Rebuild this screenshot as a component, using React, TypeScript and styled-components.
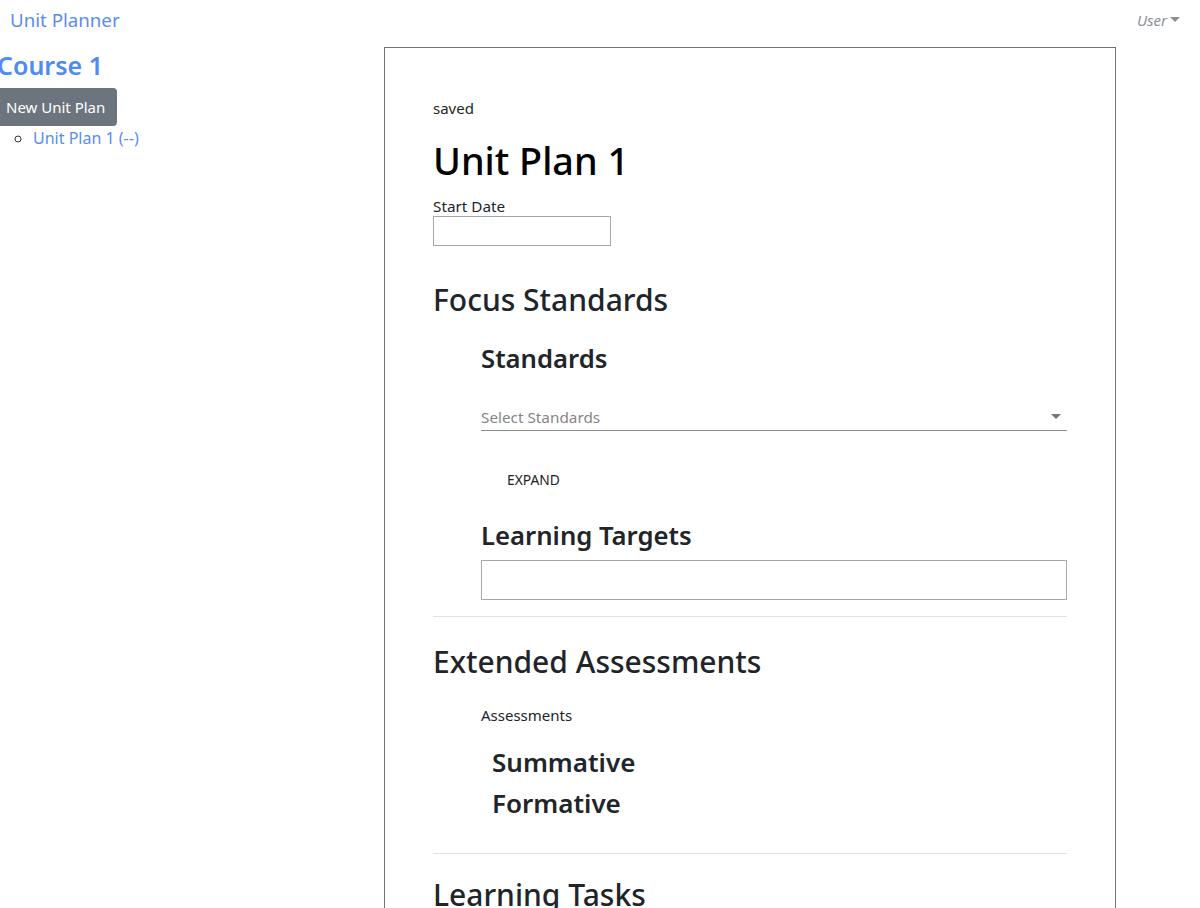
import React from "react";
import styled, { createGlobalStyle } from "styled-components";

const GlobalStyle = createGlobalStyle`
  html, body { margin: 0; padding: 0; background: #fff; }
  body {
    font-family: "Noto Sans", "Open Sans", sans-serif;
    color: #212529;
    font-size: 16px;
  }
  * { box-sizing: border-box; }
`;

const Navbar = styled.nav`
  display: flex;
  justify-content: space-between;
  align-items: center;
  height: 39px;
  padding: 0 20px 0 10px;
`;

const Brand = styled.a`
  font-size: 18.7px;
  color: #5a8cf0;
  text-decoration: none;
`;

const UserMenu = styled.span`
  display: inline-flex;
  align-items: center;
  gap: 3px;
  font-size: 15px;
  font-style: italic;
  color: #8a8f96;
`;

const Caret = styled.span`
  width: 0;
  height: 0;
  border-left: 5px solid transparent;
  border-right: 5px solid transparent;
  border-top: 5px solid #8a8f96;
`;

const Layout = styled.div`
  display: flex;
  align-items: flex-start;
  margin-top: 8px;
`;

const Sidebar = styled.aside`
  width: 390px;
  margin-left: -6px;
  flex-shrink: 0;
`;

const CourseTitle = styled.h2`
  margin: 0 0 0 3px;
  font-size: 25px;
  font-weight: 600;
  line-height: 36px;
  color: #4f8af5;
`;

const GreyButton = styled.button`
  margin-top: 5px;
  background: #6c757d;
  color: #fff;
  border: none;
  border-radius: 4px;
  font-family: inherit;
  font-size: 15px;
  height: 38px;
  padding: 0 12px;
`;

const PlanList = styled.ul`
  list-style: circle;
  margin: 0;
  padding-left: 39px;
  line-height: 24px;
  font-size: 16px;
  color: #333;
`;

const PlanLink = styled.a`
  color: #5a8cf0;
  text-decoration: none;
`;

const Panel = styled.main`
  width: 732px;
  flex-shrink: 0;
  border: 1px solid #6c757d;
  border-bottom: none;
  padding: 49px 48px 0 48px;
  height: 870px;
  overflow: hidden;
`;

const SavedText = styled.div`
  font-size: 15px;
  line-height: 22px;
`;

const PlanTitle = styled.h1`
  margin: 20px 0 0;
  font-size: 37.8px;
  font-weight: 500;
  line-height: 44px;
  color: #000;
`;

const FieldLabel = styled.label`
  display: block;
  margin-top: 13px;
  font-size: 15.3px;
  line-height: 20px;
`;

const DateInput = styled.input`
  display: block;
  width: 178px;
  height: 30px;
  border: 1px solid #a6a6a6;
  margin: 0;
`;

const SectionTitle = styled.h2<{ $top?: number }>`
  margin: 0;
  font-size: 30px;
  font-weight: 500;
  line-height: 38px;
  padding-top: ${(p) => p.$top ?? 0}px;
`;

const Indent = styled.div`
  padding-left: 48px;
`;

const SubTitle = styled.h3<{ $top?: number }>`
  margin: 0;
  font-size: 25.7px;
  font-weight: 600;
  line-height: 34px;
  padding-top: ${(p) => p.$top ?? 0}px;
`;

const SelectBox = styled.div`
  display: flex;
  justify-content: space-between;
  align-items: center;
  margin-top: 23px;
  height: 32px;
  border-bottom: 1px solid #8c8c8c;
  padding: 4px 6px 0 0;
  color: #858585;
  font-size: 15.3px;
`;

const SelectCaret = styled.span`
  width: 0;
  height: 0;
  border-left: 5px solid transparent;
  border-right: 5px solid transparent;
  border-top: 5px solid #757575;
`;

const TextButton = styled.button`
  margin: 33px 0 0;
  padding: 6px 26px;
  background: none;
  border: none;
  font-family: inherit;
  font-size: 13.8px;
  color: #222;
  text-transform: uppercase;
`;

const TextBox = styled.div`
  margin-top: 7px;
  height: 40px;
  border: 1px solid #a6a6a6;
`;

const Rule = styled.hr<{ $top?: number }>`
  margin: ${(p) => p.$top ?? 16}px 0 0;
  border: none;
  border-top: 1px solid #e2e2e2;
`;

const SmallLabel = styled.div`
  margin-top: 24px;
  font-size: 15px;
  line-height: 20px;
`;

const AssessmentList = styled.div`
  padding: 17px 0 0 11px;
  display: flex;
  flex-direction: column;
`;

const AssessmentItem = styled.h3`
  margin: 0;
  font-size: 26px;
  font-weight: 600;
  line-height: 41px;
`;

export default function App() {
  return (
    <>
      <GlobalStyle />
      <Navbar>
        <Brand href="#">Unit Planner</Brand>
        <UserMenu>
          User <Caret />
        </UserMenu>
      </Navbar>
      <Layout>
        <Sidebar>
          <CourseTitle>Course 1</CourseTitle>
          <GreyButton>New Unit Plan</GreyButton>
          <PlanList>
            <li>
              <PlanLink href="#">Unit Plan 1 (--)</PlanLink>
            </li>
          </PlanList>
        </Sidebar>
        <Panel>
          <SavedText>saved</SavedText>
          <PlanTitle>Unit Plan 1</PlanTitle>
          <FieldLabel>Start Date</FieldLabel>
          <DateInput type="text" />
          <SectionTitle $top={35}>Focus Standards</SectionTitle>
          <Indent>
            <SubTitle $top={23}>Standards</SubTitle>
            <SelectBox>
              <span>Select Standards</span>
              <SelectCaret />
            </SelectBox>
            <TextButton>Expand</TextButton>
            <SubTitle $top={24}>Learning Targets</SubTitle>
            <TextBox />
          </Indent>
          <Rule />
          <SectionTitle $top={26}>Extended Assessments</SectionTitle>
          <Indent>
            <SmallLabel>Assessments</SmallLabel>
            <AssessmentList>
              <AssessmentItem>Summative</AssessmentItem>
              <AssessmentItem>Formative</AssessmentItem>
            </AssessmentList>
          </Indent>
          <Rule $top={29} />
          <SectionTitle $top={22}>Learning Tasks</SectionTitle>
        </Panel>
      </Layout>
    </>
  );
}
